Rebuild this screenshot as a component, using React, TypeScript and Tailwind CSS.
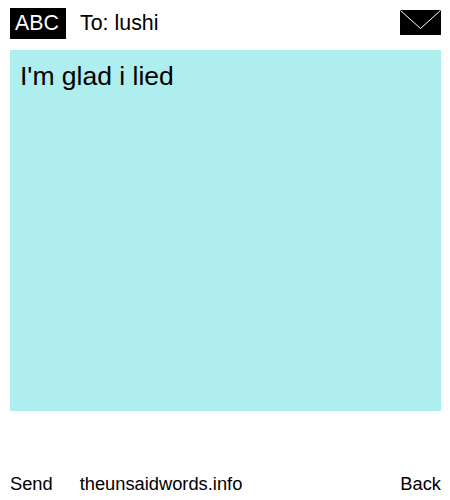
export default function App() {
  return (
    <div className="w-[450px] h-[500px] bg-white text-black flex flex-col pl-[10px] pr-[9px] pt-2 font-['Liberation_Sans',Arial,sans-serif]">
      <header className="flex items-center h-[31px]">
        <div className="w-14 h-[31px] pl-[5px] bg-black text-white text-[21.3px] leading-[31px]">ABC</div>
        <div className="ml-[14px] text-[21.4px] leading-[31px]">To: lushi</div>
        <svg className="ml-auto mb-[2px] block" width="41" height="25" viewBox="0 0 41 25" aria-hidden="true">
          <rect width="41" height="25" fill="#000" />
          <path d="M0.5 0.5 L20.5 18.5 L40.5 0.5" fill="none" stroke="#fff" strokeWidth="1" />
        </svg>
      </header>
      <main className="mt-[11px] h-[361px] bg-[#afeeee] px-[10px] pt-[8px] text-[26.5px] leading-[36px]">I'm glad i lied</main>
      <footer className="mt-[61px] flex text-[18.3px] leading-[24px]">
        <span>Send</span>
        <span className="ml-[27px]">theunsaidwords.info</span>
        <span className="ml-auto">Back</span>
      </footer>
    </div>
  );
}
